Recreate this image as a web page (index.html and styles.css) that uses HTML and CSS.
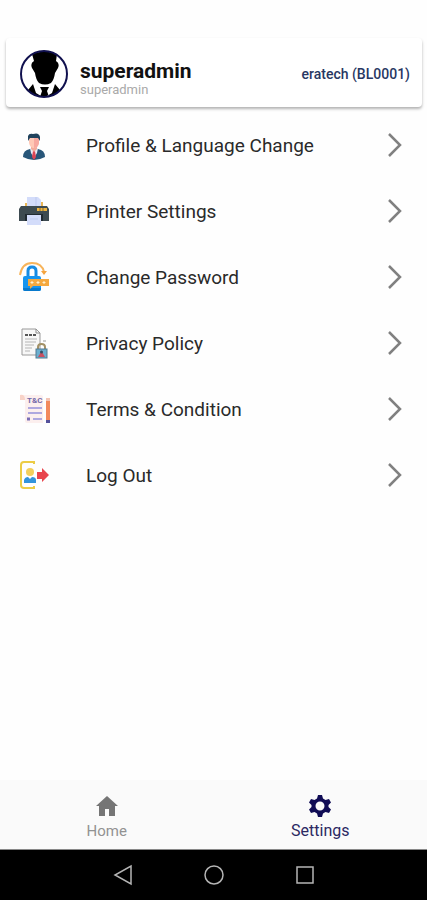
FILE: index.html
```html
<!DOCTYPE html>
<html lang="en">
<head>
<meta charset="utf-8">
<meta name="viewport" content="width=device-width, initial-scale=1">
<title>Settings</title>
<link rel="stylesheet" href="styles.css">
</head>
<body>
<header class="card">
  <svg class="avatar" viewBox="0 0 48 48" aria-hidden="true">
    <circle cx="24" cy="24" r="23" fill="#fff"/>
    <path d="M12 4Q24 -1 37 4L36 11Q40 13 38 18L35 23Q34 30 31 33Q25 36 19 33Q16 30 15 23L12 18Q10 13 14 11Z" fill="#000"/>
    <path d="M8 40L13 34L16 43L21 46Q13 46 8 40ZM40 40L35 34L32 43L27 46Q35 46 40 40ZM20 37H29L27 41L29 47H20L22 41Z" fill="#000"/>
    <circle cx="24" cy="24" r="23" fill="none" stroke="#10104e" stroke-width="2"/>
  </svg>
  <div class="user">
    <h1 class="name">superadmin</h1>
    <p class="role">superadmin</p>
  </div>
  <p class="company">eratech (BL0001)</p>
</header>

<main class="menu">
  <a class="row" href="#profile">
    <svg class="icon" viewBox="0 0 32 32" aria-hidden="true">
      <path d="M5 28Q5 21 12 20H20Q27 21 27 28Q16 34 5 28Z" fill="#285679"/>
      <path d="M12 19H20L19 24L16 29L13 24Z" fill="#e9edf5"/>
      <path d="M15 22H17L18 28L16 31L14 28Z" fill="#dd4656"/>
      <path d="M13 16H19V20L16 23L13 20Z" fill="#f2ac9b"/>
      <path d="M11 9H21V14Q20 19 16 19Q12 19 11 14Z" fill="#ffc9b6"/>
      <path d="M16 9H21V14Q20 19 16 19Z" fill="#f7a9a0"/>
      <path d="M10 12V7Q11 4 15 5Q21 3 22 8V12L20 9H12Z" fill="#20425c"/>
    </svg>
    <span class="label">Profile &amp; Language Change</span>
    <svg class="chevron" viewBox="0 0 16 24" aria-hidden="true"><path d="M2 1L13 12L2 23"/></svg>
  </a>
  <a class="row" href="#printer">
    <svg class="icon" viewBox="0 0 32 32" aria-hidden="true">
      <path d="M7 8H9V12H7ZM23 7H25V12H23Z" fill="#eab655"/>
      <path d="M9 2H20L23 5V13H9Z" fill="#d3dcfa"/>
      <path d="M3 11H29L31 14V26H1V14Z" fill="#3d4a50"/>
      <path d="M7 19H25V26H7Z" fill="#202a31"/>
      <path d="M19 13H29V16H19Z" fill="#efb43d"/>
      <path d="M22 13V16M25 13V16" stroke="#806b3f"/>
      <path d="M9 20H23V30H9Z" fill="#d3dcfa"/>
      <path d="M18 2V11M12 24H20" stroke="#bdc9ef"/>
    </svg>
    <span class="label">Printer Settings</span>
    <svg class="chevron" viewBox="0 0 16 24" aria-hidden="true"><path d="M2 1L13 12L2 23"/></svg>
  </a>
  <a class="row" href="#password">
    <svg class="icon" viewBox="0 0 32 32" aria-hidden="true">
      <path d="M2 14Q4 2 14 2Q24 2 26 11" fill="none" stroke="#f7b45b" stroke-width="2"/>
      <path d="M23 10H29L26 14Z" fill="#f5a33d"/>
      <path d="M10 16V10Q10 6 14 6Q18 6 18 10V16" fill="none" stroke="#168be3" stroke-width="3"/>
      <rect x="5" y="15" width="18" height="15" rx="2" fill="#1695ef"/>
      <path d="M5 27H23V28Q23 30 21 30H7Q5 30 5 28Z" fill="#0879cc"/>
      <path d="M10 18H31V25H15L12 28V25H10Z" fill="#f5a93f"/>
      <path d="M14 20V23M12.500 21.500H15.500M20 20V23M18.500 21.500H21.500M26 20V23M24.500 21.500H27.500" stroke="#fff0cf"/>
    </svg>
    <span class="label">Change Password</span>
    <svg class="chevron" viewBox="0 0 16 24" aria-hidden="true"><path d="M2 1L13 12L2 23"/></svg>
  </a>
  <a class="row" href="#privacy">
    <svg class="icon" viewBox="0 0 32 32" aria-hidden="true">
      <path d="M4 2H18L22 6V28H4Z" fill="#f7f7f7" stroke="#9a9a9a"/>
      <path d="M18 2V6H22" fill="none" stroke="#8d8d8d"/>
      <path d="M7 8H19" stroke="#555" stroke-width="2" stroke-dasharray="3 1"/>
      <path d="M7 12H19M7 15H18M7 18H16M7 21H14M7 24H12" stroke="#b5b5b5"/>
      <path d="M25 14H28" stroke="#999"/>
      <path d="M20 23V20Q20 17 23.500 17Q27 17 27 20V23" fill="none" stroke="#a39166" stroke-width="2"/>
      <rect x="18" y="22" width="11" height="9" fill="#6aafd0" stroke="#527b91"/>
      <path d="M20 30L23.500 24L27 30Z" fill="#c94f61"/>
      <circle cx="23.500" cy="25" r="1.500" fill="#344e64"/>
    </svg>
    <span class="label">Privacy Policy</span>
    <svg class="chevron" viewBox="0 0 16 24" aria-hidden="true"><path d="M2 1L13 12L2 23"/></svg>
  </a>
  <a class="row" href="#terms">
    <svg class="icon" viewBox="0 0 32 32" aria-hidden="true">
      <path d="M2 2H23Q25 2 25 4V30H9Q7 30 7 28V7H2Z" fill="#fcefee"/>
      <path d="M2 2Q7 1 7 7H2Z" fill="#f8d3c8"/>
      <text class="icon-text" x="9" y="10">T&amp;C</text>
      <path d="M10 15H24M10 20H24M15 26H24" stroke="#afa8df" stroke-width="2"/>
      <path d="M9 26H12" stroke="#7b6eb6" stroke-width="3"/>
      <path d="M28 8H32V27H28Z" fill="#f28a5d"/>
      <path d="M28 5H32V8H28Z" fill="#f3c4b5"/>
      <path d="M28 27H32V30H28Z" fill="#55519b"/>
    </svg>
    <span class="label">Terms &amp; Condition</span>
    <svg class="chevron" viewBox="0 0 16 24" aria-hidden="true"><path d="M2 1L13 12L2 23"/></svg>
  </a>
  <a class="row" href="#logout">
    <svg class="icon" viewBox="0 0 32 32" aria-hidden="true">
      <path d="M16 5V3H6Q3 3 3 6V26Q3 29 6 29H16V27" fill="none" stroke="#eccc45" stroke-width="2"/>
      <circle cx="12" cy="13" r="4" fill="#f3cf5c"/>
      <path d="M6 24V21Q7 18 10 18L12 20L14 18Q18 18 18 21V24Z" fill="#3294dc"/>
      <path d="M19 13H24V9L31 16L24 23V20H19Z" fill="#e8454d"/>
    </svg>
    <span class="label">Log Out</span>
    <svg class="chevron" viewBox="0 0 16 24" aria-hidden="true"><path d="M2 1L13 12L2 23"/></svg>
  </a>
</main>

<nav class="tabs" aria-label="Main">
  <a class="tab" href="#home">
    <svg class="tab-icon" viewBox="0 0 24 24" aria-hidden="true"><path d="M10 22V15H14V22H20V12H23L12 2L1 12H4V22Z"/></svg>
    <span>Home</span>
  </a>
  <a class="tab active" href="#settings" aria-current="page">
    <svg class="tab-icon" viewBox="0 0 24 24" aria-hidden="true"><path fill-rule="evenodd" d="M10 1H14L15 4.500L17.500 6L21 5L23 8.500L20.500 11V13L23 15.500L21 19L17.500 18L15 19.500L14 23H10L9 19.500L6.500 18L3 19L1 15.500L3.500 13V11L1 8.500L3 5L6.500 6L9 4.500ZM12 7.500A4.500 4.500 0 1 0 12 16.500A4.500 4.500 0 1 0 12 7.500Z"/></svg>
    <span>Settings</span>
  </a>
</nav>

<footer class="system">
  <button class="key" type="button" aria-label="Back"><svg viewBox="0 0 22 22"><path d="M19 2V20L3 11Z"/></svg></button>
  <button class="key" type="button" aria-label="Home"><svg viewBox="0 0 22 22"><circle cx="11" cy="11" r="9"/></svg></button>
  <button class="key" type="button" aria-label="Recent apps"><svg viewBox="0 0 22 22"><path d="M3 3H19V19H3Z"/></svg></button>
</footer>
</body>
</html>
```
FILE: styles.css
```css
* {
  box-sizing: border-box;
}

body {
  display: flex;
  flex-direction: column;
  min-height: 100vh;
  margin: 0;
  background: #fefefe;
  color: #2a2a2a;
  font-family: Roboto, "Liberation Sans", sans-serif;
}

h1,
p {
  margin: 0;
}

a {
  color: inherit;
  text-decoration: none;
}

.card {
  display: flex;
  align-items: center;
  margin: 38px 5px 0 6px;
  padding: 12px 12px 9px 14px;
  border-radius: 4px;
  background: #fff;
  box-shadow: 0 2px 3px rgba(0, 0, 0, 0.3);
}

.avatar {
  width: 48px;
  height: 48px;
  margin-right: 12px;
}

.user {
  flex: 1;
  padding-top: 8px;
}

.name {
  color: #111;
  font-size: 21px;
  font-weight: 700;
  line-height: 24px;
}

.role {
  color: #aaa;
  font-size: 13px;
  line-height: 14px;
}

.company {
  color: #283763;
  font-size: 14px;
  font-weight: 500;
}

.menu {
  flex: 1;
  padding-top: 5px;
}

.row {
  display: flex;
  align-items: center;
  height: 66px;
  padding: 0 24px 0 18px;
}

.icon {
  width: 32px;
  height: 32px;
  margin-right: 36px;
}

.icon-text {
  fill: #7469a9;
  font-size: 8px;
  font-weight: 700;
}

.label {
  flex: 1;
  font-size: 19px;
}

.chevron {
  width: 16px;
  height: 24px;
  fill: none;
  stroke: #808080;
  stroke-width: 2.5;
}

.tabs {
  display: flex;
  height: 70px;
  border-bottom: 1px solid #888;
  background: #fafafa;
}

.tab {
  display: flex;
  flex: 1;
  flex-direction: column;
  align-items: center;
  padding-top: 14px;
  color: #929292;
  font-size: 15px;
  line-height: 26px;
}

.tab-icon {
  width: 24px;
  height: 24px;
  fill: #757575;
}

.active {
  color: #2b2862;
  font-size: 16px;
}

.active .tab-icon {
  fill: #100c55;
}

.system {
  display: flex;
  justify-content: center;
  align-items: center;
  gap: 69px;
  height: 50px;
  background: #000;
}

.key {
  width: 22px;
  height: 22px;
  padding: 0;
  border: 0;
  background: none;
}

.key svg {
  display: block;
  fill: none;
  stroke: #b5b5b5;
  stroke-width: 1.5;
}
```
